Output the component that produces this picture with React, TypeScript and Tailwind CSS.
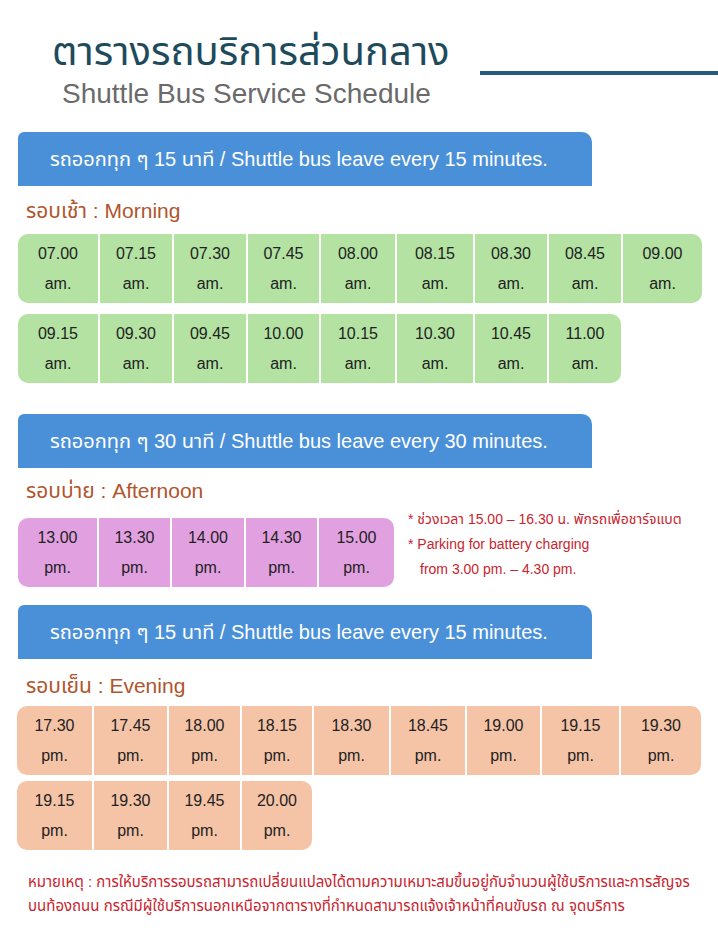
import React from "react";

type Cell = { t: string; s: string };

const morning1: Cell[] = ["07.00", "07.15", "07.30", "07.45", "08.00", "08.15", "08.30", "08.45", "09.00"].map((t) => ({ t, s: "am." }));
const morning2: Cell[] = ["09.15", "09.30", "09.45", "10.00", "10.15", "10.30", "10.45", "11.00"].map((t) => ({ t, s: "am." }));
const afternoon: Cell[] = ["13.00", "13.30", "14.00", "14.30", "15.00"].map((t) => ({ t, s: "pm." }));
const evening1: Cell[] = ["17.30", "17.45", "18.00", "18.15", "18.30", "18.45", "19.00", "19.15", "19.30"].map((t) => ({ t, s: "pm." }));
const evening2: Cell[] = ["19.15", "19.30", "19.45", "20.00"].map((t) => ({ t, s: "pm." }));

const FONT = "font-['Liberation_Sans','Noto_Sans_Thai','Noto_Sans',sans-serif]";

function Banner({ text }: { text: string }) {
  return (
    <div className="ml-[18px] flex h-[54px] w-[574px] items-center rounded-tl-[6px] rounded-tr-[10px] bg-[#4a90d9] pl-[32px] text-[20px] text-white">
      {text}
    </div>
  );
}

function Label({ th, en }: { th: string; en: string }) {
  return (
    <div className="ml-[26px] text-[21px] leading-[24px] text-[#b0552c]">
      {th} : {en}
    </div>
  );
}

function Row({ cells, bg, cols, total }: { cells: Cell[]; bg: string; cols: string; total: number }) {
  return (
    <div className={`grid ${cols} gap-x-[2px]`}>
      {cells.map((c, i) => {
        const first = i === 0;
        const last = i === cells.length - 1;
        return (
          <div
            key={i}
            className={`${bg} flex h-[69px] flex-col items-center justify-center text-[16px] leading-[30px] text-[#222] ${first ? "rounded-l-[10px]" : ""} ${last ? "rounded-r-[10px]" : ""}`}
          >
            <span>{c.t}</span>
            <span>{c.s}</span>
          </div>
        );
      })}
      {Array.from({ length: total - cells.length }).map((_, i) => (
        <div key={"e" + i} />
      ))}
    </div>
  );
}

export default function App() {
  return (
    <div className={`relative h-[932px] w-[718px] overflow-hidden bg-white ${FONT}`}>
      {/* header */}
      <div className="flex">
        <div className="pl-[52px] pt-[24px]">
          <div className="text-[40px] leading-[54px] text-[#1e4b5c]">ตารางรถบริการส่วนกลาง</div>
          <div className="pl-[10px] text-[28px] leading-[32px] text-[#6a6a6a]">Shuttle Bus Service Schedule</div>
        </div>
        <div className="ml-auto mt-[71px] h-[4px] w-[238px] bg-[#275d7c]" />
      </div>

      <div className="mt-[22px]">
        <Banner text="รถออกทุก ๆ 15 นาที / Shuttle bus leave every 15 minutes." />
      </div>
      <div className="mt-[13px]">
        <Label th="รอบเช้า" en="Morning" />
      </div>
      <div className="ml-[18px] mt-[11px] flex flex-col gap-y-[11px]">
        <Row cells={morning1} bg="bg-[#b3e2a3]" total={9} cols="grid-cols-[80px_72px_72px_71px_74px_76px_72px_72px_79px] w-[684px]" />
        <Row cells={morning2} bg="bg-[#b3e2a3]" total={9} cols="grid-cols-[80px_72px_72px_71px_74px_76px_72px_72px_79px] w-[684px]" />
      </div>

      <div className="mt-[31px]">
        <Banner text="รถออกทุก ๆ 30 นาที / Shuttle bus leave every 30 minutes." />
      </div>
      <div className="mt-[11px]">
        <Label th="รอบบ่าย" en="Afternoon" />
      </div>
      <div className="ml-[18px] mt-[15px] flex">
        <div className="w-[376px]">
          <Row cells={afternoon} bg="bg-[#e1a1e0]" total={5} cols="grid-cols-[79px_71px_72px_71px_75px]" />
        </div>
        <div className="ml-[14px] -mt-[11px] text-[14px] leading-[25px] text-[#c8242f]">
          <div>* ช่วงเวลา 15.00 – 16.30 น. พักรถเพื่อชาร์จแบต</div>
          <div>* Parking for battery charging</div>
          <div className="pl-[12px]">from 3.00 pm. – 4.30 pm.</div>
        </div>
      </div>

      <div className="mt-[18px]">
        <Banner text="รถออกทุก ๆ 15 นาที / Shuttle bus leave every 15 minutes." />
      </div>
      <div className="mt-[15px]">
        <Label th="รอบเย็น" en="Evening" />
      </div>
      <div className="ml-[17px] mt-[8px] flex flex-col gap-y-[6px]">
        <Row cells={evening1} bg="bg-[#f5c4a7]" total={9} cols="grid-cols-[75px_73px_71px_70px_75px_74px_73px_77px_80px] w-[684px]" />
        <Row cells={evening2} bg="bg-[#f5c4a7]" total={9} cols="grid-cols-[75px_73px_71px_70px_75px_74px_73px_77px_80px] w-[684px]" />
      </div>

      <div className="ml-[28px] mt-[20px] text-[15px] leading-[24px] text-[#c8242f]">
        <div>หมายเหตุ : การให้บริการรอบรถสามารถเปลี่ยนแปลงได้ตามความเหมาะสมขึ้นอยู่กับจำนวนผู้ใช้บริการและการสัญจร</div>
        <div>บนท้องถนน กรณีมีผู้ใช้บริการนอกเหนือจากตารางที่กำหนดสามารถแจ้งเจ้าหน้าที่คนขับรถ ณ จุดบริการ</div>
      </div>
    </div>
  );
}
